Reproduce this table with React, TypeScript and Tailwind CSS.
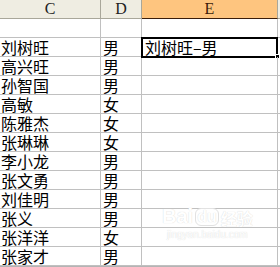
const rows: [string, string][] = [
  ["", ""],
  ["刘树旺", "男"],
  ["高兴旺", "男"],
  ["孙智国", "男"],
  ["高敏", "女"],
  ["陈雅杰", "女"],
  ["张琳琳", "女"],
  ["李小龙", "男"],
  ["张文勇", "男"],
  ["刘佳明", "男"],
  ["张义", "男"],
  ["张洋洋", "女"],
  ["张家才", "男"],
];

const cellText = "font-['Noto_Sans_CJK_SC',sans-serif] text-[16px] leading-[19px] text-black";

export default function App() {
  return (
    <div className="relative w-[280px] h-[267px] overflow-hidden bg-white">
      <div className="grid grid-cols-[101px_41px_136px_2px]">
        {/* Column headers */}
        <div className="h-[19px] flex items-center justify-center bg-[#efede2] border-r border-b border-[#a9a79a] font-['Liberation_Serif',serif] text-[16px] text-[#222]">
          C
        </div>
        <div className="h-[19px] flex items-center justify-center bg-[#efede2] border-r border-b border-[#a9a79a] font-['Liberation_Serif',serif] text-[16px] text-[#222]">
          D
        </div>
        <div className="h-[19px] flex items-center justify-center bg-[#fec57f] border-r border-r-[#a9a79a] border-b border-b-[#3b1e0a] font-['Liberation_Serif',serif] text-[16px] text-[#3b1e0a]">
          E
        </div>
        <div className="h-[19px] bg-[#efede2] border-b border-[#a9a79a]" />

        {/* Data rows */}
        {rows.map(([name, sex], i) => (
          <div key={i} className="contents">
            <div className={`h-[19px] pl-px border-r border-b border-[#c0c0c0] whitespace-nowrap overflow-hidden ${cellText}`}>
              {name}
            </div>
            <div className={`h-[19px] pl-[2px] border-r border-b border-[#c0c0c0] overflow-hidden ${cellText}`}>
              {sex}
            </div>
            <div className={`relative h-[19px] pl-[3px] border-r border-b border-[#c0c0c0] whitespace-nowrap ${cellText}`}>
              {i === 1 && (
                <>
                  刘树旺–男
                  <div className="absolute -left-px -top-px w-[137px] h-[21px] border-2 border-black" />
                  <div className="absolute -right-[3px] -bottom-[3px] w-[5px] h-[5px] bg-black border border-white" />
                </>
              )}
            </div>
            <div className="h-[19px] border-b border-[#c0c0c0]" />
          </div>
        ))}
      </div>
      <div className="h-[3px] bg-[#b4b4b4]" />

      {/* watermark */}
      <div className="absolute left-[162px] top-[206px] flex flex-col items-center text-white [text-shadow:0_0_1px_#cfcfcf] pointer-events-none">
        <div className="flex items-end gap-[2px] font-['Liberation_Sans',sans-serif] font-bold text-[20px] leading-none">
          <span>Bai</span>
          <span className="rounded-[6px] border border-[#e2e2e2] px-[1px] text-[16px]">du</span>
          <span className="font-['Noto_Sans_CJK_SC',sans-serif] text-[16px]">经验</span>
        </div>
        <div className="mt-[4px] font-['Liberation_Sans',sans-serif] text-[10px] leading-none">jingyan.baidu.com</div>
      </div>
    </div>
  );
}
